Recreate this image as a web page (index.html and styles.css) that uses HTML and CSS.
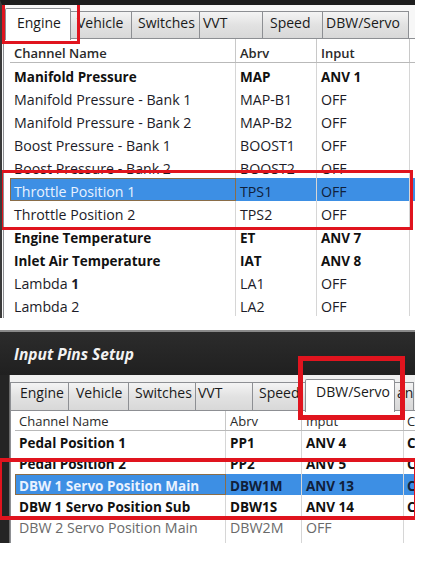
FILE: index.html
```html
<!DOCTYPE html>
<html>
<head>
<meta charset="utf-8">
<link rel="stylesheet" href="styles.css">
</head>
<body>
<div class="shot">
  <section class="w1">
    <div class="tabs tabs1">
      <div class="tab sel t1-engine">Engine</div>
      <div class="tab t1-vehicle">Vehicle</div>
      <div class="tab t1-switches">Switches</div>
      <div class="tab t1-vvt">VVT</div>
      <div class="tab t1-speed">Speed</div>
      <div class="tab t1-dbw">DBW/Servo</div>
    </div>
    <div class="panel p1">
      <div class="list l1">
        <div class="row head"><span>Channel Name</span><span>Abrv</span><span>Input</span></div>
        <div class="row b"><span>Manifold Pressure</span><span>MAP</span><span>ANV 1</span></div>
        <div class="row"><span>Manifold Pressure - Bank 1</span><span>MAP-B1</span><span>OFF</span></div>
        <div class="row"><span>Manifold Pressure - Bank 2</span><span>MAP-B2</span><span>OFF</span></div>
        <div class="row"><span>Boost Pressure - Bank 1</span><span>BOOST1</span><span>OFF</span></div>
        <div class="row"><span>Boost Pressure - Bank 2</span><span>BOOST2</span><span>OFF</span></div>
        <div class="row selrow"><span class="focus">Throttle Position 1</span><span>TPS1</span><span>OFF</span></div>
        <div class="row"><span>Throttle Position 2</span><span>TPS2</span><span>OFF</span></div>
        <div class="row b"><span>Engine Temperature</span><span>ET</span><span>ANV 7</span></div>
        <div class="row b"><span>Inlet Air Temperature</span><span>IAT</span><span>ANV 8</span></div>
        <div class="row"><span>Lambda <b>1</b></span><span>LA1</span><span>OFF</span></div>
        <div class="row"><span>Lambda 2</span><span>LA2</span><span>OFF</span></div>
      </div>
    </div>
    <div class="redbox rb1"></div>
    <div class="redbox rb2"></div>
  </section>

  <section class="w2">
    <div class="title">Input Pins Setup</div>
    <div class="w2body">
      <div class="tabs tabs2">
        <div class="tab t2-engine">Engine</div>
        <div class="tab t2-vehicle">Vehicle</div>
        <div class="tab t2-switches">Switches</div>
        <div class="tab t2-vvt">VVT</div>
        <div class="tab t2-speed">Speed</div>
        <div class="tab sel t2-dbw">DBW/Servo</div>
        <div class="tab t2-ar">an</div>
      </div>
      <div class="panel p2">
        <div class="list l2">
          <div class="row head"><span>Channel Name</span><span>Abrv</span><span>Input</span><span>C</span></div>
          <div class="row b"><span>Pedal Position 1</span><span>PP1</span><span>ANV 4</span><span>C</span></div>
          <div class="row b"><span>Pedal Position 2</span><span>PP2</span><span>ANV 5</span><span>C</span></div>
          <div class="row b selrow"><span class="focus">DBW 1 Servo Position Main</span><span>DBW1M</span><span>ANV 13</span><span>C</span></div>
          <div class="row b"><span>DBW 1 Servo Position Sub</span><span>DBW1S</span><span>ANV 14</span><span>C</span></div>
          <div class="row dim"><span>DBW 2 Servo Position Main</span><span>DBW2M</span><span>OFF</span><span></span></div>
          <div class="row dim"><span>DBW 2 Servo Position Sub</span><span>DBW2S</span><span>OFF</span><span></span></div>
        </div>
      </div>
    </div>
    <div class="redbox rb3"></div>
    <div class="redbox rb4"></div>
  </section>
</div>
</body>
</html>
```

FILE: styles.css
```css
* { box-sizing: border-box; }
html, body { margin: 0; padding: 0; background: #ffffff; }
body {
  font-family: "Open Sans", "Noto Sans", sans-serif;
  color: #1c1c28;
  width: 425px;
  height: 562px;
  overflow: hidden;
}
.shot { position: relative; width: 425px; }

/* ---------- top window ---------- */
.w1 {
  position: relative;
  width: 415px;
  height: 318px;
  border-top: 5px solid #1d1d1d;
  border-left: 2px solid #3a3a3a;
  background: #f7f7f7;
  overflow: hidden;
}
.tabs {
  display: flex;
  align-items: flex-end;
  position: relative;
  z-index: 2;
}
.tabs1 { height: 33px; padding-left: 3px; }
.tab {
  height: 27px;
  border: 1px solid #8d8f93;
  border-bottom: none;
  margin-right: -1px;
  background: linear-gradient(#f4f4f4, #e2e2e2 50%, #d8d8d8);
  font-size: 14px;
  line-height: 22px;
  padding-left: 6px;
  white-space: nowrap;
  overflow: hidden;
  color: #1a1a1a;
}
.tab.sel {
  height: 32px;
  background: #ffffff;
  margin-bottom: -2px;
  border-radius: 2px 2px 0 0;
  position: relative;
  z-index: 3;
  line-height: 28px;
}
.t1-engine { width: 66px; padding-left: 11px; }
.t1-vehicle { width: 62px; }
.t1-switches { width: 69px; }
.t1-vvt { width: 64px; padding-left: 3px; }
.t1-speed { width: 61px; padding-left: 7px; }
.t1-dbw { width: 87px; padding-left: 3px; }

.panel {
  background: #ffffff;
  border-top: 1px solid #8d8f93;
  border-left: 1px solid #8d8f93;
}
.p1 { height: 280px; padding-left: 6px; margin-left: 1px; }

.list { display: flex; flex-direction: column; }
.row {
  display: grid;
  white-space: nowrap;
}
.row span {
  padding-left: 4px;
  overflow: hidden;
  border-right: 1px solid #d6d6d6;
  font-size: 14.2px;
}
.row.b span { font-weight: 700; color: #111; font-size: 13.5px; }
.row span b { font-size: 13.5px; }

.l1 .row { grid-template-columns: 226px 81px 93px; height: 23px; }
.l1 .row span { line-height: 20px; padding-top: 4px; }
.l1 .row.head { height: 24px; border-bottom: 1px solid #b9b9b9; }
.l1 .row.head span { line-height: 20px; padding-top: 4px; }
.row.head span { font-weight: 600; color: #2a2a2a; font-size: 13px; border-right-color: #c8c8c8; }

.row.selrow { background: #3d8fe4; }
.row.selrow span { color: #10203a; }
.row.selrow span.focus {
  color: #e9f2ff;
  border: 1px solid #8a6d48;
}
.l1 .row.selrow span.focus { padding-top: 3px; padding-left: 3px; }

/* ---------- bottom window ---------- */
.w2 {
  position: relative;
  margin-top: 12px;
  width: 415px;
  height: 213px;
  border-top: 2px solid #8a8a8a;
  background: #242424;
  overflow: hidden;
}
.title {
  height: 43px;
  line-height: 44px;
  padding-left: 14px;
  color: #f2f2f2;
  font-weight: 700;
  font-style: italic;
  font-size: 15.5px;
  background: linear-gradient(#2c2c2c, #202020);
}
.w2body {
  margin-left: 9px;
  background: #f0f0f0;
  height: 200px;
  border-left: 1px solid #6a6a6a;
}
.tabs2 { height: 35px; padding-left: 0; }
.tabs2 .tab { height: 28px; line-height: 20px; }
.tabs2 .tab.sel { height: 33px; line-height: 24px; padding-left: 10px; }
.t2-engine { width: 59px; padding-left: 9px; }
.t2-vehicle { width: 61px; padding-left: 7px; }
.t2-switches { width: 68px; padding-left: 6px; }
.t2-vvt { width: 58px; padding-left: 2px; }
.t2-speed { width: 54px; padding-left: 6px; }
.t2-dbw { width: 90px; }
.t2-ar { width: 20px; padding-left: 2px !important; }

.p2 { padding-left: 4px; height: 200px; }
.l2 .row { grid-template-columns: 211px 76px 102px 24px; height: 21.3px; }
.l2 .row span { padding-left: 4px; line-height: 22px; padding-top: 1px; }
.l2 .row.head { height: 20px; border-bottom: 1px solid #b9b9b9; }
.l2 .row.head span { font-weight: normal; line-height: 20px; padding-top: 0; }
.l2 .row span:last-child { padding-left: 3px; }
.l2 .row.selrow span.focus { padding-left: 3px; padding-top: 0; }
.row.dim span { color: #6a6a6a; }

/* ---------- red annotation boxes ---------- */
.redbox {
  position: absolute;
  border: 3px solid #e0141e;
  z-index: 10;
  pointer-events: none;
}
.rb1 { left: 0; top: -5px; width: 78px; height: 44px; border-top: none; }
.rb2 { left: -2px; top: 165px; width: 413px; height: 60px; }
.rb3 { left: 298px; top: 24px; width: 107px; height: 64px; border-width: 5px; }
.rb4 { left: -2px; top: 126px; width: 420px; height: 62px; border-width: 4px; }
```
